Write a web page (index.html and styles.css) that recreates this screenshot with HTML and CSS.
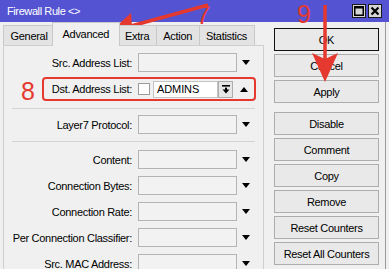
FILE: index.html
```html
<!DOCTYPE html>
<html>
<head>
<meta charset="utf-8">
<title>Firewall Rule</title>
<link rel="stylesheet" href="styles.css">
</head>
<body>
<div class="window">
  <div class="titlebar">
    <span class="title">Firewall Rule &lt;&gt;</span>
    <div class="ctrls">
      <span class="ctrl"><svg width="10" height="10" viewBox="0 0 10 10"><rect x="0.75" y="0.75" width="8.5" height="8.5" fill="none" stroke="#000" stroke-width="1.5"/><rect x="0" y="0" width="10" height="2.5" fill="#000"/></svg></span>
      <span class="ctrl"><svg width="10" height="10" viewBox="0 0 10 10"><path d="M1.5 1.5 L8.5 8.5 M8.5 1.5 L1.5 8.5" stroke="#000" stroke-width="2.2"/></svg></span>
    </div>
  </div>
  <div class="main">
    <div class="left">
      <div class="tabs">
        <span class="tab">General</span>
        <span class="tab active">Advanced</span>
        <span class="tab">Extra</span>
        <span class="tab">Action</span>
        <span class="tab">Statistics</span>
      </div>
      <div class="panel">
        <div class="row">
          <span class="label">Src. Address List:</span>
          <span class="box"></span>
          <span class="dd"><span class="tri-down"></span></span>
        </div>
        <div class="row dst">
          <span class="label">Dst. Address List:</span>
          <span class="check"></span>
          <span class="value">ADMINS</span>
          <span class="btn-sm"><svg width="8" height="9" viewBox="0 0 8 9"><rect x="0" y="0" width="8" height="1.6" fill="#000"/><rect x="3" y="2.6" width="2" height="2.4" fill="#000"/><polygon points="0.5,4.6 7.5,4.6 4,8.4" fill="#000"/></svg></span>
          <span class="dd"><span class="tri-up"></span></span>
          <span class="highlight"></span>
        </div>
        <div class="sep"></div>
        <div class="row">
          <span class="label">Layer7 Protocol:</span>
          <span class="box"></span>
          <span class="dd"><span class="tri-down"></span></span>
        </div>
        <div class="sep"></div>
        <div class="row">
          <span class="label">Content:</span>
          <span class="box"></span>
          <span class="dd"><span class="tri-down"></span></span>
        </div>
        <div class="row">
          <span class="label">Connection Bytes:</span>
          <span class="box"></span>
          <span class="dd"><span class="tri-down"></span></span>
        </div>
        <div class="row">
          <span class="label">Connection Rate:</span>
          <span class="box"></span>
          <span class="dd"><span class="tri-down"></span></span>
        </div>
        <div class="row">
          <span class="label">Per Connection Classifier:</span>
          <span class="box"></span>
          <span class="dd"><span class="tri-down"></span></span>
        </div>
        <div class="row">
          <span class="label">Src. MAC Address:</span>
          <span class="box"></span>
          <span class="dd"><span class="tri-down"></span></span>
        </div>
      </div>
    </div>
    <div class="buttons">
      <div class="btn default">OK</div>
      <div class="btn">Cancel</div>
      <div class="btn">Apply</div>
      <div class="btn spaced">Disable</div>
      <div class="btn">Comment</div>
      <div class="btn">Copy</div>
      <div class="btn">Remove</div>
      <div class="btn">Reset Counters</div>
      <div class="btn">Reset All Counters</div>
    </div>
  </div>
</div>
<svg class="annot" width="389" height="269" viewBox="0 0 389 269">
  <line x1="208" y1="5" x2="131" y2="26" stroke="#e5392f" stroke-width="3.5"/>
  <polygon points="110,32 131,13 132,26 138,37" fill="#e5392f"/>
  <line x1="325" y1="5" x2="325" y2="60" stroke="#e5392f" stroke-width="3.5"/>
  <polygon points="312,53 325,59 338,53 325,82" fill="#e5392f"/>
</svg>
<span class="num n7">7</span>
<span class="num n8">8</span>
<span class="num n9">9</span>
</body>
</html>
```
FILE: styles.css
```css
html, body {
  margin: 0;
  padding: 0;
}
body {
  width: 389px;
  height: 269px;
  overflow: hidden;
  position: relative;
  background: #f0f0f0;
  font-family: "Liberation Sans", Arial, sans-serif;
  font-size: 11px;
  letter-spacing: -0.3px;
  color: #000;
}
.window {
  width: 389px;
  height: 269px;
}
.titlebar {
  height: 22px;
  background: #5454d2;
  display: flex;
  align-items: center;
  justify-content: space-between;
  padding: 0 7px 0 7px;
  box-sizing: border-box;
}
.title {
  color: #fff;
  font-size: 11px;
  letter-spacing: -0.4px;
}
.ctrls {
  display: flex;
  gap: 2px;
}
.ctrl {
  width: 14px;
  height: 14px;
  box-sizing: border-box;
  border: 1px solid #1a1a1a;
  background: #d6d6d6;
  display: flex;
  align-items: center;
  justify-content: center;
}
.ctrl svg {
  display: block;
}
.main {
  display: flex;
  height: 247px;
  width: 386px;
  border-right: 1px solid #9a9a9a;
  box-sizing: border-box;
}
.left {
  margin-left: 3px;
  width: 261px;
  display: flex;
  flex-direction: column;
}
.tabs {
  height: 25px;
  display: flex;
  align-items: flex-end;
  position: relative;
  z-index: 1;
}
.tab {
  height: 20px;
  box-sizing: border-box;
  border: 1px solid #c9c9c9;
  border-bottom: none;
  background: #e3e3e3;
  padding: 0 6.5px;
  display: flex;
  align-items: center;
  letter-spacing: -0.3px;
  margin-right: -1px;
}
.tab.active {
  height: 24px;
  background: #f0f0f0;
  margin: 0 -2px -1px -2px;
  padding: 0 9.5px 2px 9.5px;
  position: relative;
  z-index: 2;
}
.panel {
  flex: 1;
  border: 1px solid #cfcfcf;
  border-bottom: none;
  background: #f0f0f0;
  padding-top: 7px;
}
.row {
  display: flex;
  align-items: center;
  height: 19px;
  margin-bottom: 7px;
  position: relative;
}
.label {
  width: 128px;
  text-align: right;
  white-space: nowrap;
  flex: none;
}
.box {
  margin-left: 6px;
  width: 99px;
  height: 19px;
  box-sizing: border-box;
  border: 1px solid #b4b4b4;
  background: #f2f2f2;
  flex: none;
}
.dd {
  width: 18px;
  display: flex;
  justify-content: center;
  align-items: center;
  flex: none;
}
.tri-down {
  width: 0;
  height: 0;
  border-left: 4.5px solid transparent;
  border-right: 4.5px solid transparent;
  border-top: 5px solid #000;
}
.tri-up {
  width: 0;
  height: 0;
  border-left: 4.5px solid transparent;
  border-right: 4.5px solid transparent;
  border-bottom: 5px solid #000;
}
.dst {
  height: 20px;
  margin-bottom: 9px;
}
.check {
  margin-left: 6px;
  width: 12px;
  height: 12px;
  box-sizing: border-box;
  border: 1px solid #9a9a9a;
  background: #fff;
  flex: none;
}
.value {
  margin-left: 3px;
  width: 65px;
  height: 17px;
  box-sizing: border-box;
  border: 1px solid #c4c4c4;
  background: #fff;
  padding-left: 3px;
  display: flex;
  align-items: center;
  flex: none;
  letter-spacing: -0.1px;
}
.btn-sm {
  width: 15px;
  height: 17px;
  box-sizing: border-box;
  border: 1px solid #adadad;
  background: #e6e6e6;
  display: flex;
  align-items: center;
  justify-content: center;
  flex: none;
}
.btn-sm svg {
  display: block;
}
.dst .dd {
  width: 21px;
}
.highlight {
  position: absolute;
  left: 38px;
  top: -2px;
  bottom: -2px;
  width: 214px;
  border: 2.5px solid #e5392f;
  border-radius: 4px;
  box-sizing: border-box;
  pointer-events: none;
}
.sep {
  height: 1px;
  background: #d4d4d4;
  margin: 0 8px 6px 8px;
}
.sep + .row + .sep {
  margin-top: 2px;
  margin-bottom: 8px;
}
.buttons {
  margin-left: 10px;
  margin-top: 6px;
  width: 105px;
  display: flex;
  flex-direction: column;
  gap: 3px;
}
.btn {
  height: 23px;
  box-sizing: border-box;
  border: 1px solid #adadad;
  background: #e9e9e9;
  display: flex;
  align-items: center;
  justify-content: center;
  white-space: nowrap;
}
.btn.default {
  border: 1px solid #111;
}
.btn.spaced {
  margin-top: 6px;
}
.annot {
  position: absolute;
  left: 0;
  top: 0;
  pointer-events: none;
}
.num {
  position: absolute;
  color: #e5392f;
  line-height: 1;
  letter-spacing: 0;
}
.n7 {
  left: 196px;
  top: 0;
  font-size: 26px;
  line-height: normal;
}
.n8 {
  left: 21px;
  top: 79px;
  font-size: 25px;
}
.n9 {
  left: 297px;
  top: 2px;
  font-size: 25px;
}
```
